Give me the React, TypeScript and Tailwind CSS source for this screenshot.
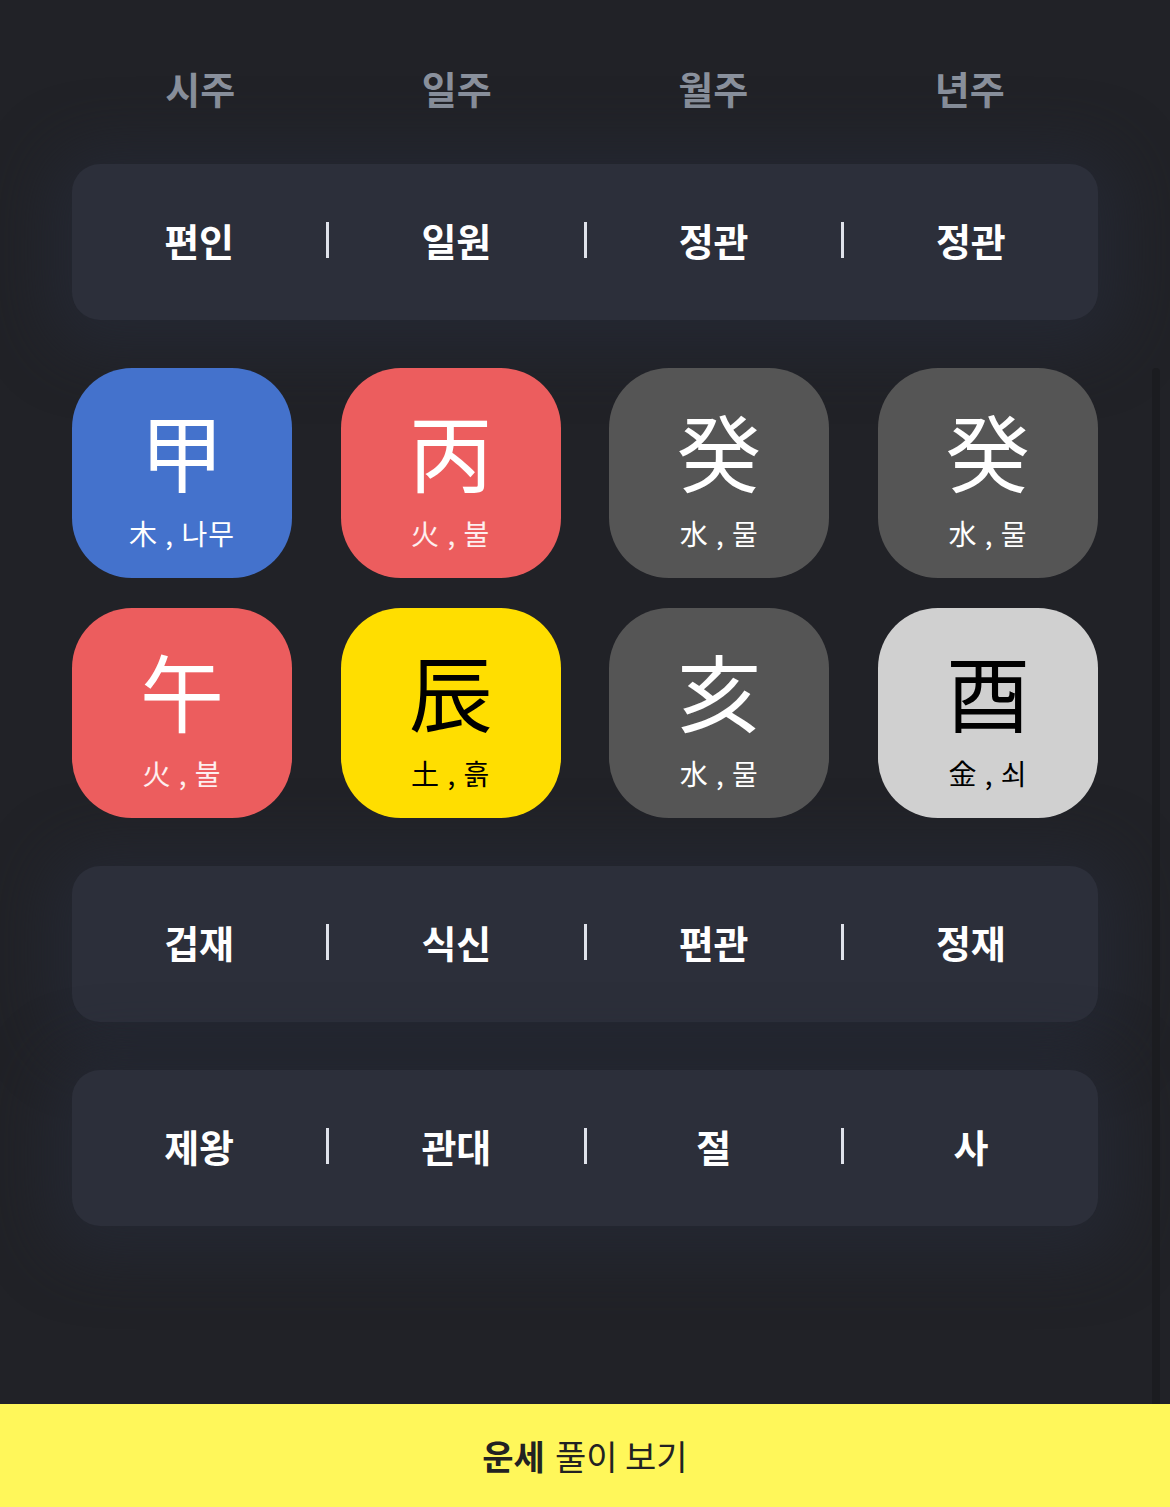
import React from 'react';

const font = { fontFamily: '"Noto Sans CJK KR", "Noto Sans", sans-serif' };

type Tile = { char: string; sub: string; bg: string; text: string; subText: string };

const pillars = ['시주', '일주', '월주', '년주'];
const topRow = ['편인', '일원', '정관', '정관'];
const midRow = ['겁재', '식신', '편관', '정재'];
const lastRow = ['제왕', '관대', '절', '사'];

const stems: Tile[] = [
  { char: '甲', sub: '木 , 나무', bg: 'bg-[#4472cc]', text: 'text-white', subText: 'text-white' },
  { char: '丙', sub: '火 , 불', bg: 'bg-[#ec5d5e]', text: 'text-white', subText: 'text-white/90' },
  { char: '癸', sub: '水 , 물', bg: 'bg-[#555555]', text: 'text-white', subText: 'text-white' },
  { char: '癸', sub: '水 , 물', bg: 'bg-[#555555]', text: 'text-white', subText: 'text-white' },
];

const branches: Tile[] = [
  { char: '午', sub: '火 , 불', bg: 'bg-[#ec5d5e]', text: 'text-white', subText: 'text-white/90' },
  { char: '辰', sub: '土 , 흙', bg: 'bg-[#ffde00]', text: 'text-black', subText: 'text-black' },
  { char: '亥', sub: '水 , 물', bg: 'bg-[#555555]', text: 'text-white', subText: 'text-white' },
  { char: '酉', sub: '金 , 쇠', bg: 'bg-[#d0d0d0]', text: 'text-black', subText: 'text-black' },
];

const InfoCard = ({ items }: { items: string[] }) => (
  <div className="flex h-[156px] items-center rounded-[28px] bg-[#2c2f3a] pb-[4px] shadow-[0_8px_60px_24px_rgba(38,42,54,0.75)]">
    {items.map((label, i) => (
      <React.Fragment key={i}>
        {i > 0 && <div className="h-[36px] w-[3px] bg-[#dfe2ea]" />}
        <div className="flex-1 text-center text-[38px] font-bold leading-[44px] text-white">{label}</div>
      </React.Fragment>
    ))}
  </div>
);

const TileRow = ({ tiles }: { tiles: Tile[] }) => (
  <div className="relative z-10 flex justify-between">
    {tiles.map((t, i) => (
      <div
        key={i}
        className={`flex h-[210px] w-[220px] flex-col items-center rounded-[60px] pt-[36px] ${t.bg}`}
      >
        <div className={`text-[84px] leading-[92px] ${t.text}`}>{t.char}</div>
        <div className={`mt-[19px] text-[28px] leading-[36px] tracking-[1px] ${t.subText}`}>{t.sub}</div>
      </div>
    ))}
  </div>
);

export default function App() {
  return (
    <div className="relative flex min-h-[1507px] flex-col bg-[#212227]" style={font}>
      <div className="flex-1">
        <div className="grid h-[164px] grid-cols-4 px-[72px] pt-[66px]">
          {pillars.map((p) => (
            <div key={p} className="text-center text-[38px] font-bold leading-[44px] text-[#8a919d]">
              {p}
            </div>
          ))}
        </div>

        <div className="flex flex-col gap-[48px] px-[72px]">
          <InfoCard items={topRow} />
          <div className="flex flex-col gap-[30px]">
            <TileRow tiles={stems} />
            <TileRow tiles={branches} />
          </div>
          <InfoCard items={midRow} />
          <InfoCard items={lastRow} />
        </div>
      </div>

      <div className="absolute right-[10px] top-[368px] h-[1036px] w-[8px] rounded-t-full bg-[#1b1c20]" />

      <button className="flex h-[103px] w-full items-center justify-center gap-[10px] bg-[#fff75a] text-[34px] leading-[40px] text-[#222222]">
        <span className="font-bold">운세</span>
        <span>풀이 보기</span>
      </button>
    </div>
  );
}
